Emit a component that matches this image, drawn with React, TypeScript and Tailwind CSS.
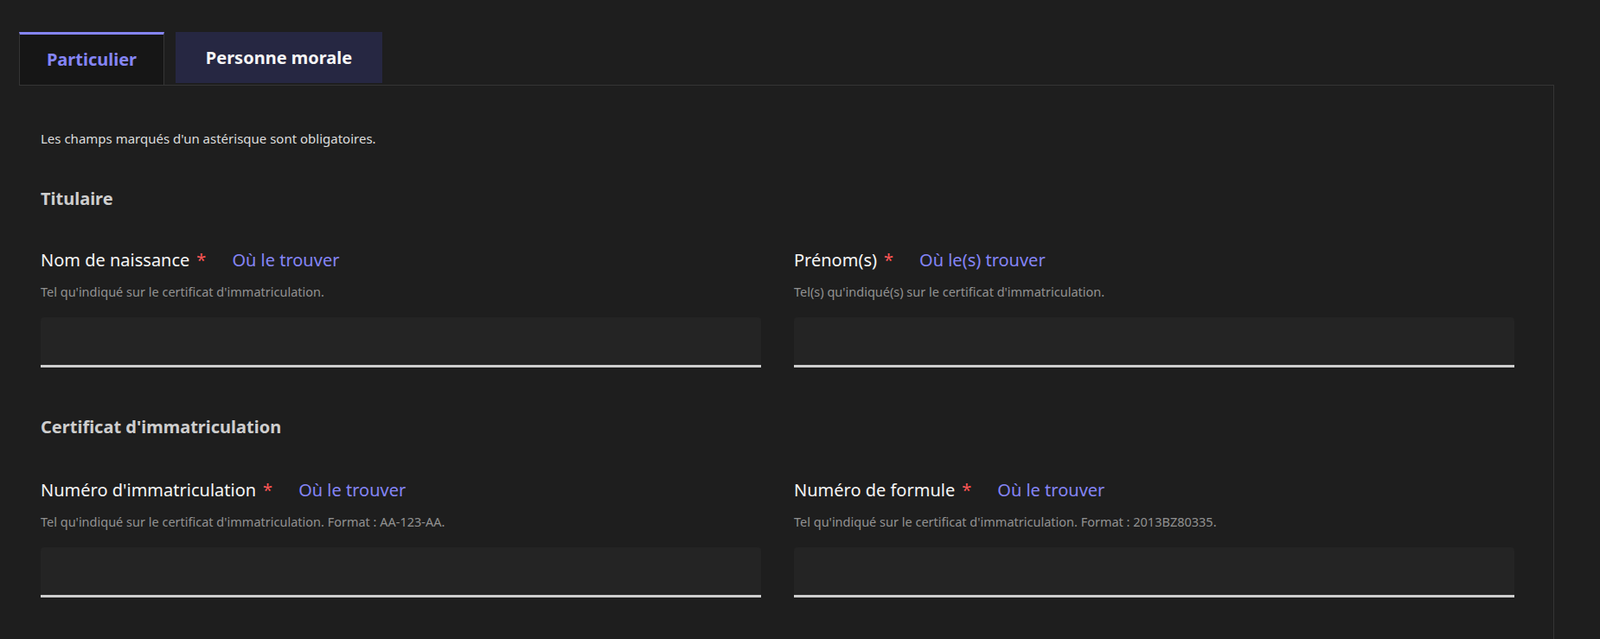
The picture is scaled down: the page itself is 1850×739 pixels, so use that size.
import React from 'react';

const Field = ({ label, link, hint }: { label: string; link: string; hint: string }) => (
  <div className="flex flex-col">
    <div className="flex items-center text-[20px] leading-[28px] text-[#f6f6f6]">
      <span>{label}</span>
      <span className="ml-[8px] text-[#ff5655]">*</span>
      <a className="ml-[30px] text-[#8585f6]">{link}</a>
    </div>
    <p className="mt-[12px] text-[14.5px] leading-[20px] text-[#929292]">{hint}</p>
    <div className="mt-[20px] h-[58px] rounded-t-[4px] border-b-[3px] border-[#cecece] bg-[#242424]" />
  </div>
);

const App = () => {
  return (
    <div className="h-[739px] w-[1850px] overflow-hidden bg-[#1e1e1e] font-['DejaVu_Sans',sans-serif]">
      <div className="ml-[22px] mt-[37px] w-[1775px]">
        <div className="flex items-end gap-[13px]">
          <button className="h-[61px] w-[168px] border-x border-t-[3px] border-x-[#353535] border-t-[#8585f6] bg-[#161616] text-[20px] font-bold text-[#8585f6]">
            Particulier
          </button>
          <button className="mb-[2px] h-[59px] w-[239px] bg-[#262742] text-[20px] font-bold text-[#f6f6f6]">
            Personne morale
          </button>
        </div>
        <div className="h-[700px] border-r border-t border-[#353535] px-[25px] pt-[50px]">
          <p className="text-[15px] leading-[22px] text-[#dddddd]">Les champs marqués d'un astérisque sont obligatoires.</p>
          <h3 className="mt-[44px] text-[20px] font-bold text-[#cecece]">Titulaire</h3>
          <div className="mt-[42px] grid w-[1704px] grid-cols-2 gap-x-[38px]">
            <Field label="Nom de naissance" link="Où le trouver" hint="Tel qu'indiqué sur le certificat d'immatriculation." />
            <Field label="Prénom(s)" link="Où le(s) trouver" hint="Tel(s) qu'indiqué(s) sur le certificat d'immatriculation." />
          </div>
          <h3 className="mt-[54px] text-[20px] font-bold text-[#cecece]">Certificat d'immatriculation</h3>
          <div className="mt-[44px] grid w-[1704px] grid-cols-2 gap-x-[38px]">
            <Field label="Numéro d'immatriculation" link="Où le trouver" hint="Tel qu'indiqué sur le certificat d'immatriculation. Format : AA-123-AA." />
            <Field label="Numéro de formule" link="Où le trouver" hint="Tel qu'indiqué sur le certificat d'immatriculation. Format : 2013BZ80335." />
          </div>
        </div>
      </div>
    </div>
  );
};

export default App;
